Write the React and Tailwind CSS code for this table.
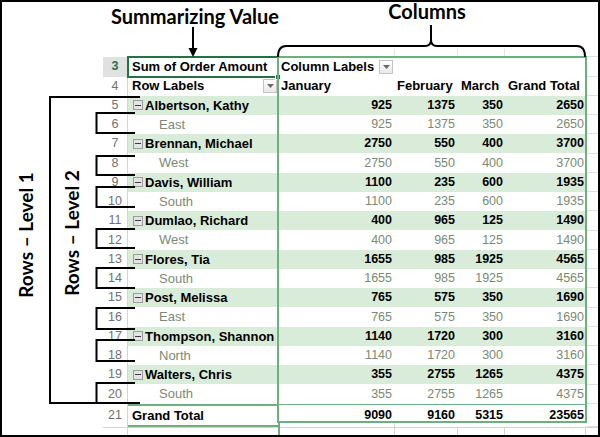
import React from "react";

const rows = [
  ["Albertson, Kathy", "East", [925, 1375, 350, 2650]],
  ["Brennan, Michael", "West", [2750, 550, 400, 3700]],
  ["Davis, William", "South", [1100, 235, 600, 1935]],
  ["Dumlao, Richard", "West", [400, 965, 125, 1490]],
  ["Flores, Tia", "South", [1655, 985, 1925, 4565]],
  ["Post, Melissa", "East", [765, 575, 350, 1690]],
  ["Thompson, Shannon", "North", [1140, 1720, 300, 3160]],
  ["Walters, Chris", "South", [355, 2755, 1265, 4375]],
];

const brackets = [
  [113, 133],
  [156, 175],
  [187, 207],
  [229, 248],
  [268, 288],
  [308, 329],
  [340, 361],
  [383, 403],
];

function DropBtn() {
  return (
    <span className="flex h-[14px] w-[14px] items-center justify-center border border-[#c4c4c4] bg-linear-to-b from-white to-[#e9e9e9]">
      <svg width="7" height="4" viewBox="0 0 7 4">
        <path d="M0 0H7L3.5 4Z" fill="#6b6b6b" />
      </svg>
    </span>
  );
}

function MinusBox() {
  return (
    <span className="flex h-[10px] w-[10px] shrink-0 items-center justify-center border border-[#9c9c9c] bg-[#e4e4e4]">
      <span className="h-px w-[6px] bg-[#3c3c3c]" />
    </span>
  );
}

function RowNum({ n }) {
  return (
    <div className="flex items-center justify-center border-r border-[#d4d4d4] text-[12.5px] text-[#707070]">
      {n}
    </div>
  );
}

function FStub() {
  return <div className="border-b border-[#dedede]" />;
}

function DataRow({ num, label, values, level }) {
  const band = level === 1;
  const txt = band ? "font-bold text-black" : "text-[#7b8a74]";
  const bg = band ? "bg-[#d9ecda]" : "bg-white";
  return (
    <div className="grid h-[19.25px] grid-cols-[101px_25px_150px_117px_63px_47px_81px_12px]">
      <div />
      <RowNum n={num} />
      <div className={`flex items-center text-[13px] ${bg} ${txt} ${band ? "pl-[5px]" : "pl-[31px]"}`}>
        {band && <MinusBox />}
        <span className={band ? "ml-[2px] whitespace-nowrap" : "whitespace-nowrap"}>{label}</span>
      </div>
      <div className={`flex items-center justify-end pr-[3px] text-[12.5px] ${bg} ${txt}`}>{values[0]}</div>
      <div className={`flex items-center justify-end pr-[3px] text-[12.5px] ${bg} ${txt}`}>{values[1]}</div>
      <div className={`flex items-center justify-end pr-[2px] text-[12.5px] ${bg} ${txt}`}>{values[2]}</div>
      <div className={`flex items-center justify-end pr-[2px] text-[12.5px] ${bg} ${txt}`}>{values[3]}</div>
      <FStub />
    </div>
  );
}

export default function App() {
  let n = 5;
  const body = [];
  rows.forEach(([name, sub, v]) => {
    body.push(<DataRow key={n} num={n} label={name} values={v} level={1} />);
    n++;
    body.push(<DataRow key={n} num={n} label={sub} values={v} level={2} />);
    n++;
  });

  return (
    <div
      className="relative h-[437px] w-[600px] overflow-hidden border-2 border-black bg-white"
      style={{ fontFamily: '"Liberation Sans", Arial, sans-serif' }}
    >
      {/* blank area of rows 1-2 under the captions */}
      <div className="h-[47px]" />
      <div className="grid h-[8px] grid-cols-[101px_25px_150px_117px_63px_47px_81px_12px]">
        <div />
        <div />
        <div />
        <div className="border-r border-[#e2e2e2]" />
        <div className="border-r border-[#e2e2e2]" />
        <div className="border-r border-[#e2e2e2]" />
        <div />
        <div className="border-b border-[#dedede]" />
      </div>

      {/* row 3 */}
      <div className="grid h-[19.25px] grid-cols-[101px_25px_150px_117px_63px_47px_81px_12px]">
        <div />
        <div className="flex items-center justify-center border-r border-[#c8c8c8] bg-[#e1e1e1] text-[12.5px] font-bold text-[#217346]">
          3
        </div>
        <div className="relative flex items-center pl-[4px] text-[13px] font-bold text-black">
          <span className="whitespace-nowrap">Sum of Order Amount</span>
          <div className="absolute -bottom-px -left-px -right-px -top-px border-2 border-[#217346]" />
          <div className="absolute -bottom-[3px] -right-[3px] h-[6px] w-[6px] border border-white bg-[#217346]" />
        </div>
        <div className="flex items-center justify-between pl-[3px] pr-[2px] text-[13px] font-bold text-black">
          <span className="whitespace-nowrap">Column Labels</span>
          <DropBtn />
        </div>
        <div />
        <div />
        <div />
        <FStub />
      </div>

      {/* row 4 */}
      <div className="grid h-[19.25px] grid-cols-[101px_25px_150px_117px_63px_47px_81px_12px]">
        <div />
        <RowNum n={4} />
        <div className="flex items-center justify-between pl-[4px] pr-px text-[13px] font-bold text-black">
          <span>Row Labels</span>
          <DropBtn />
        </div>
        <div className="flex items-center pl-[3px] text-[13px] font-bold text-black">January</div>
        <div className="flex items-center pl-[2px] text-[13px] font-bold text-black">February</div>
        <div className="flex items-center pl-[3px] text-[13px] font-bold text-black">March</div>
        <div className="flex items-center whitespace-nowrap pl-[3px] text-[13px] font-bold text-black">Grand Total</div>
        <FStub />
      </div>

      {body}

      {/* row 21 grand total */}
      <div className="grid h-[19.25px] grid-cols-[101px_25px_150px_117px_63px_47px_81px_12px]">
        <div />
        <RowNum n={21} />
        <div className="flex items-center border-y-2 border-[#6fae7f] pl-[4px] text-[13px] font-bold text-black">
          Grand Total
        </div>
        <div className="flex items-center justify-end border-t border-[#6fae7f] pr-[3px] text-[12.5px] font-bold text-black">9090</div>
        <div className="flex items-center justify-end border-t border-[#6fae7f] pr-[3px] text-[12.5px] font-bold text-black">9160</div>
        <div className="flex items-center justify-end border-t border-[#6fae7f] pr-[2px] text-[12.5px] font-bold text-black">5315</div>
        <div className="flex items-center justify-end border-t border-[#6fae7f] pr-[2px] text-[12.5px] font-bold text-black">23565</div>
        <FStub />
      </div>

      {/* row 22 (partly visible) */}
      <div className="grid h-[14px] grid-cols-[101px_25px_150px_117px_63px_47px_81px_12px]">
        <div />
        <div className="mt-[4px] border-r border-t border-[#d4d4d4]" />
        <div className="mt-[4px] border-t border-[#d4d4d4]" />
        <div className="border-l-2 border-r border-[#d4d4d4] border-l-[#6fae7f]">
          <div className="mt-[4px] border-t border-[#d4d4d4]" />
        </div>
        <div className="mt-[4px] border-r border-t border-[#d4d4d4]" />
        <div className="mt-[4px] border-r border-t border-[#d4d4d4]" />
        <div className="mt-[4px] border-r border-t border-[#d4d4d4]" />
        <div className="mt-[4px] border-t border-[#d4d4d4]" />
      </div>

      {/* pivot range outline */}
      <div className="pointer-events-none absolute left-[275px] top-[54px] h-[367px] w-[310px] border-2 border-[#6fae7f]" />

      {/* captions */}
      <div
        className="absolute left-[193px] top-[4px] -translate-x-1/2 whitespace-nowrap text-[20px] font-bold leading-[20px] text-black"
        style={{ fontFamily: "Lato, sans-serif" }}
      >
        Summarizing Value
      </div>
      <div
        className="absolute left-[425px] top-0 -translate-x-1/2 whitespace-nowrap text-[20px] font-bold leading-[18px] text-black"
        style={{ fontFamily: "Lato, sans-serif" }}
      >
        Columns
      </div>
      <div
        className="absolute left-[24px] top-[233px] -translate-x-1/2 -translate-y-1/2 -rotate-90 whitespace-nowrap text-[19px] font-bold leading-[20px] text-black"
        style={{ fontFamily: "Lato, sans-serif" }}
      >
        Rows – Level 1
      </div>
      <div
        className="absolute left-[70px] top-[231px] -translate-x-1/2 -translate-y-1/2 -rotate-90 whitespace-nowrap text-[19px] font-bold leading-[20px] text-black"
        style={{ fontFamily: "Lato, sans-serif" }}
      >
        Rows – Level 2
      </div>

      {/* bracket and arrow drawing */}
      <svg
        className="pointer-events-none absolute -left-[2px] -top-[2px]"
        width="600"
        height="437"
        viewBox="0 0 600 437"
      >
        <g fill="none" stroke="#000" strokeWidth="2">
          <path d="M140 97H50V403H140" />
          {brackets.map(([t, b], i) => (
            <path key={i} d={`M135 ${t}H96.5V${b}H135`} />
          ))}
          <path d="M193 27V50" />
          <path d="M278 57Q278 46 286 46H425Q431 46 431 40V25M431 40Q431 46 437 46H577Q585 46 585 57" />
        </g>
        <path d="M188.5 48H197.5L193 57Z" fill="#000" />
      </svg>
    </div>
  );
}
